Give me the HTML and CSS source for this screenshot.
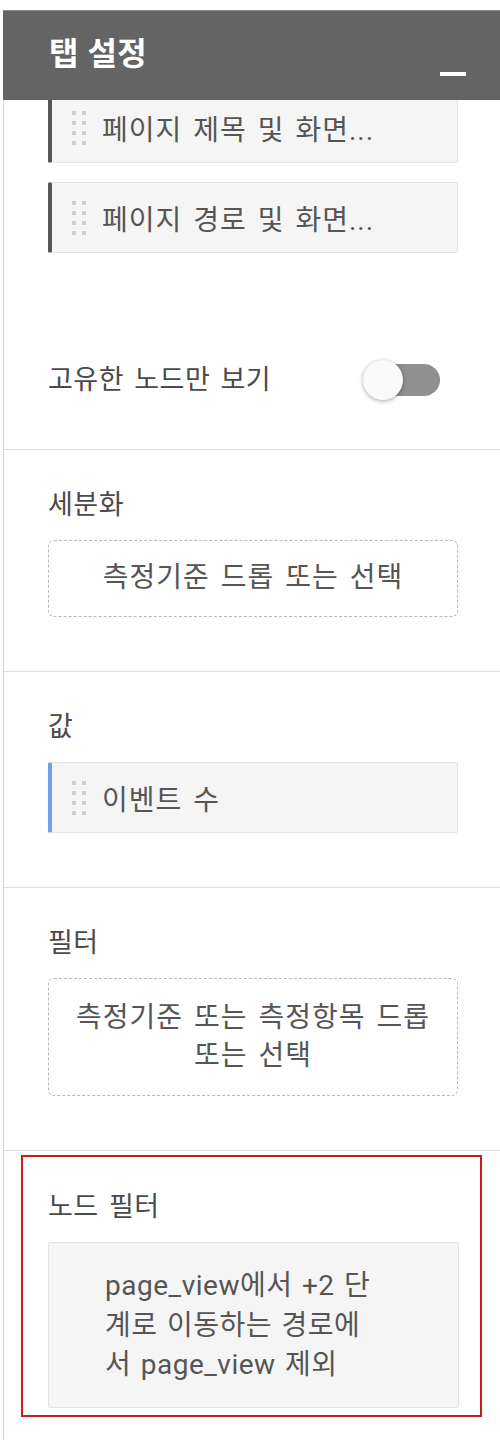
FILE: index.html
```html
<!DOCTYPE html>
<html lang="ko">
<head>
<meta charset="utf-8">
<link rel="stylesheet" href="styles.css">
</head>
<body>
<div class="panel">
  <header class="head">
    <h1 class="title">탭 설정</h1>
    <span class="minimize"></span>
  </header>
  <div class="content">
    <section class="sec sec-dims">
      <div class="chip chip-dark chip-first"><span class="grip"><i></i><i></i><i></i><i></i><i></i><i></i><i></i><i></i></span><span class="chip-text">페이지 제목 및 화면...</span></div>
      <div class="chip chip-dark"><span class="grip"><i></i><i></i><i></i><i></i><i></i><i></i><i></i><i></i></span><span class="chip-text">페이지 경로 및 화면...</span></div>
      <div class="toggle-row">
        <span class="label">고유한 노드만 보기</span>
        <span class="switch"><span class="track"></span><span class="knob"></span></span>
      </div>
    </section>
    <section class="sec">
      <div class="label sec-label">세분화</div>
      <div class="drop drop-one">측정기준 드롭 또는 선택</div>
    </section>
    <section class="sec">
      <div class="label sec-label">값</div>
      <div class="chip chip-blue"><span class="grip"><i></i><i></i><i></i><i></i><i></i><i></i><i></i><i></i></span><span class="chip-text">이벤트 수</span></div>
    </section>
    <section class="sec">
      <div class="label sec-label">필터</div>
      <div class="drop drop-two">측정기준 또는 측정항목 드롭<br>또는 선택</div>
    </section>
    <section class="sec sec-last">
      <div class="highlight">
        <div class="label sec-label">노드 필터</div>
        <div class="filter-box"><p class="filter-text">page_view에서 +2 단<br>계로 이동하는 경로에<br>서 page_view 제외</p></div>
      </div>
    </section>
  </div>
</div>
</body>
</html>
```

FILE: styles.css
```css
* { box-sizing: border-box; }
html, body { margin: 0; padding: 0; background: #fff; }
body {
  font-family: Roboto, "Noto Sans CJK KR", "Noto Sans", sans-serif;
  color: #555;
  width: 500px;
  height: 1440px;
  overflow: hidden;
}
.panel {
  margin-left: 3px;
  margin-top: 10px;
  border-left: 1px solid #d6d6d6;
  min-height: 1430px;
}
.head {
  position: relative;
  z-index: 2;
  height: 90px;
  margin-left: -1px;
  background: #646464;
  border-top: 1px solid #8a8a8a;
  display: flex;
  justify-content: space-between;
  align-items: flex-start;
  padding: 0 34px 0 46px;
}
.title {
  margin: 23px 0 0;
  font-size: 32px;
  font-weight: 700;
  color: #fff;
  line-height: 40px;
  letter-spacing: 0.5px;
}
.minimize {
  margin-top: 61px;
  width: 26px;
  height: 4px;
  background: #fff;
}
.content { margin-top: -8px; }
.sec {
  border-bottom: 1px solid #dedede;
  padding: 40px 42px 54px 44px;
}
.sec-dims { padding-top: 0; padding-bottom: 49px; }
.label {
  font-size: 27px;
  line-height: 30px;
  color: #4a4a4a;
  letter-spacing: 0.5px;
  word-spacing: 3px;
}
.sec-label { margin-bottom: 20px; }
.chip {
  display: flex;
  align-items: center;
  height: 71px;
  background: #f5f5f5;
  border: 1px solid #e3e3e3;
  border-left: 4px solid #555;
  border-radius: 2px;
  padding-left: 20px;
}
.chip-first { margin-bottom: 19px; }
.chip-blue { border-left-color: #6e9ff0; }
.grip {
  display: grid;
  grid-template-columns: 4px 4px;
  grid-auto-rows: 4px;
  column-gap: 6px;
  row-gap: 6px;
  margin-right: 16px;
}
.grip i { display: block; background: #cfcfcf; }
.chip-text {
  font-size: 28px;
  color: #555;
  letter-spacing: 1px;
  word-spacing: 3px;
}
.toggle-row {
  margin-top: 107px;
  height: 40px;
  display: flex;
  align-items: center;
  justify-content: space-between;
  padding-right: 18px;
}
.switch {
  position: relative;
  width: 77px;
  height: 40px;
}
.track {
  position: absolute;
  left: 17px;
  top: 4px;
  width: 60px;
  height: 32px;
  border-radius: 16px;
  background: #909090;
}
.knob {
  position: absolute;
  left: 0;
  top: 0;
  width: 40px;
  height: 40px;
  border-radius: 50%;
  background: #fafafa;
  box-shadow: 0 1px 4px rgba(0,0,0,0.35);
}
.drop {
  border: 1.5px dashed #b8b8b8;
  border-radius: 6px;
  text-align: center;
  font-size: 28px;
  color: #555;
  letter-spacing: 1px;
  word-spacing: 3px;
}
.drop-one { height: 77px; line-height: 74px; }
.drop-two { padding: 20px 10px; line-height: 38px; }
.sec-last { border-bottom: none; padding: 4px 18px 0 17px; }
.highlight {
  border: 2px solid #c81e1e;
  padding: 35px 21px 7px 25px;
}
.filter-box {
  background: #f5f5f5;
  border: 1px solid #e3e3e3;
  border-radius: 2px;
  padding: 23px 20px 22px 56px;
}
.filter-text {
  margin: 0;
  font-size: 28px;
  line-height: 39.5px;
  color: #555;
  letter-spacing: 0.5px;
  word-spacing: 2px;
}
```
